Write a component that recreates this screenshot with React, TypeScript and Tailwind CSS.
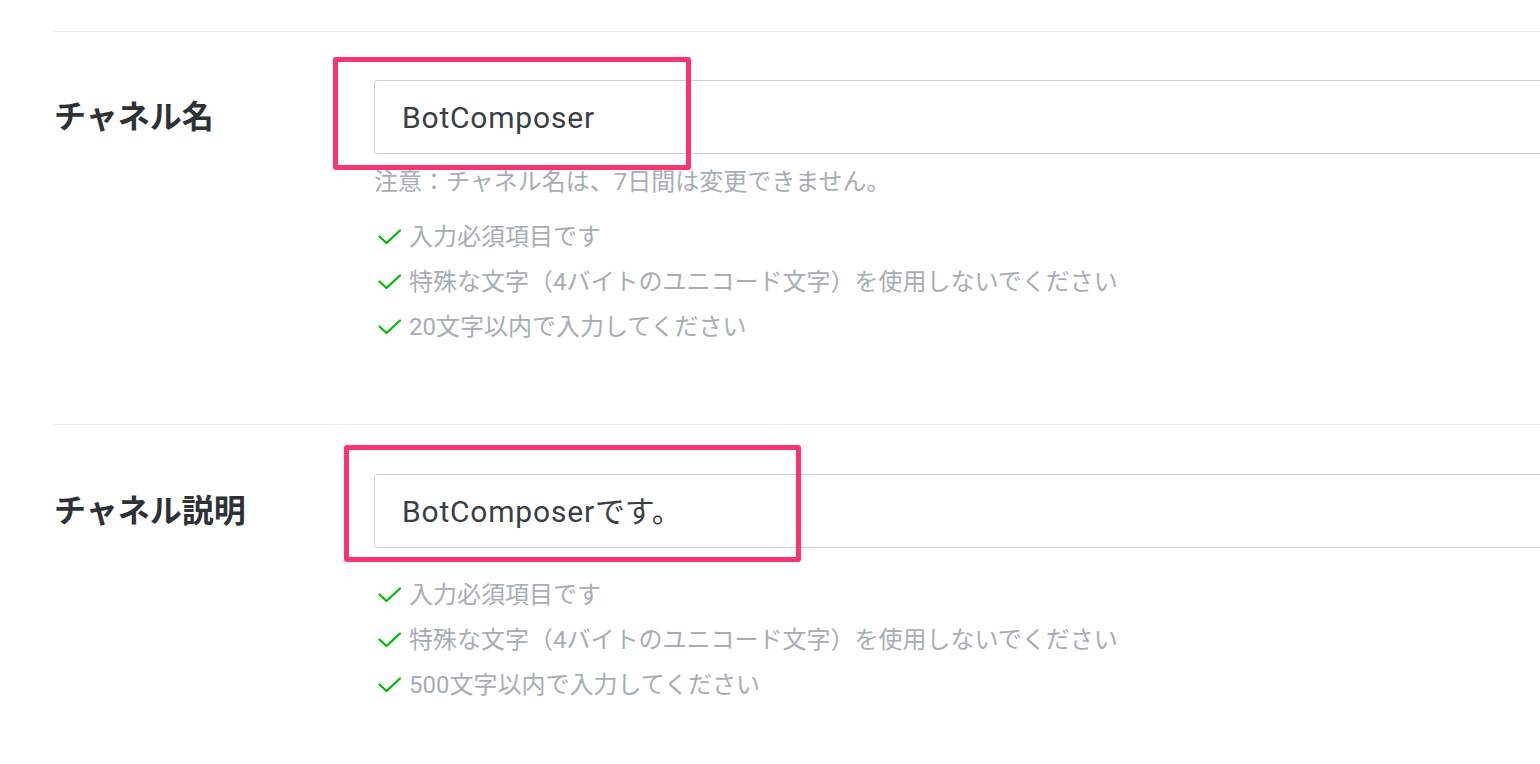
const font = { fontFamily: '"Roboto", "Noto Sans CJK JP", sans-serif' };

const Check = () => (
  <svg width="24" height="16" viewBox="0 0 24 16" fill="none" className="shrink-0">
    <path d="M1.5 7.5 L8.5 14 L22 1.5" stroke="#00b900" strokeWidth="2.2" strokeLinecap="round" strokeLinejoin="round" />
  </svg>
);

const Rules = ({ items }: { items: string[] }) => (
  <ul>
    {items.map((t) => (
      <li key={t} className="flex items-center h-[45px] pl-[4px] gap-[7px] text-[24px] text-[#a6adb6]">
        <Check />
        <span>{t}</span>
      </li>
    ))}
  </ul>
);

const App = () => {
  return (
    <div className="min-h-screen bg-white pl-[54px] pt-[31px] overflow-hidden" style={font}>
      {/* チャネル名 */}
      <section className="border-t border-[#ececec] flex pt-[48px] pb-[75px]">
        <div className="w-[320px] shrink-0 h-[74px] flex items-center">
          <h2 className="text-[32px] font-bold text-[#2e3237]">チャネル名</h2>
        </div>
        <div className="relative flex-1">
          <div className="w-[1300px] h-[74px] border border-[#cdd1d7] rounded-[3px] flex items-center pl-[27px] text-[30px] tracking-[0.8px] text-[#3a3f46]">
            BotComposer
          </div>
          <p className="mt-[10px] leading-[36px] text-[24px] text-[#a6adb6]">
            注意：チャネル名は、7日間は変更できません。
          </p>
          <div className="mt-[14px]">
            <Rules
              items={[
                "入力必須項目です",
                "特殊な文字（4バイトのユニコード文字）を使用しないでください",
                "20文字以内で入力してください",
              ]}
            />
          </div>
          <div className="absolute left-[-41px] top-[-23px] w-[358px] h-[113px] border-[5px] border-[#fd3371] rounded-[3px]" />
        </div>
      </section>

      {/* チャネル説明 */}
      <section className="border-t border-[#ececec] flex pt-[49px]">
        <div className="w-[320px] shrink-0 h-[74px] flex items-center">
          <h2 className="text-[32px] font-bold text-[#2e3237]">チャネル説明</h2>
        </div>
        <div className="relative flex-1">
          <div className="w-[1300px] h-[74px] border border-[#cdd1d7] rounded-[3px] flex items-center pl-[27px] text-[30px] tracking-[0.8px] text-[#3a3f46]">
            BotComposer<span className="tracking-normal">です。</span>
          </div>
          <div className="mt-[24px]">
            <Rules
              items={[
                "入力必須項目です",
                "特殊な文字（4バイトのユニコード文字）を使用しないでください",
                "500文字以内で入力してください",
              ]}
            />
          </div>
          <div className="absolute left-[-30px] top-[-29px] w-[457px] h-[117px] border-[5px] border-[#fd3371] rounded-[3px]" />
        </div>
      </section>
    </div>
  );
};

export default App;
